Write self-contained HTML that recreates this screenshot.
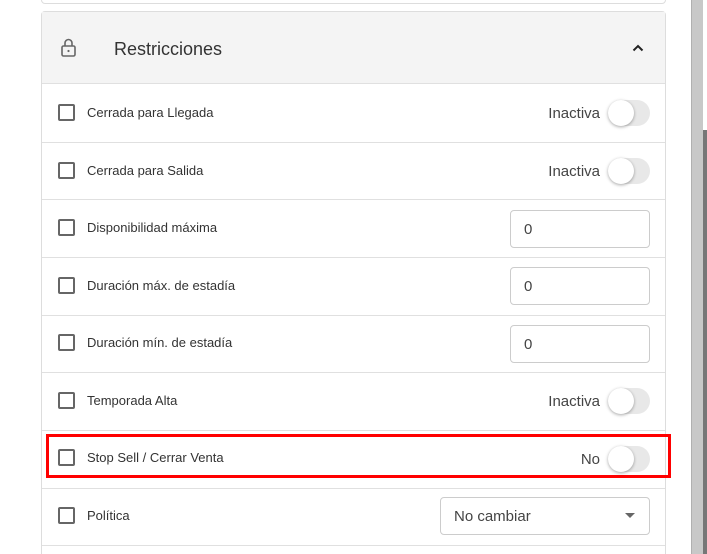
<!DOCTYPE html>
<html><head><meta charset="utf-8"><style>
*{box-sizing:border-box;margin:0;padding:0}
html,body{width:707px;height:554px;overflow:hidden}
body{background:#fff;position:relative;font-family:"Liberation Sans",Arial,sans-serif;color:#333}
.abs{position:absolute}
.card{left:41px;top:11px;width:625px;height:550px;border:1px solid #ddd;border-radius:4px;background:#fff}
.prev{left:41px;top:-10px;width:625px;height:14px;border:1px solid #ddd;border-radius:4px}
.hdr{left:42px;top:12px;width:623px;height:72px;background:#f4f4f4;border-bottom:1px solid #e0e0e0}
.line{left:42px;width:623px;height:1px;background:#e0e0e0}
.cb{left:58px;width:17px;height:17px;border:2px solid #666;border-radius:2px}
.lbl{left:87px;font-size:13px;color:#333}
.st{font-size:15px;color:#444;text-align:right}
.tg{left:608px;width:42px;height:26px;border-radius:13px;background:#e8e8e8}
.tg:after{content:"";position:absolute;left:0;top:0;width:26px;height:26px;border-radius:50%;background:#fff;box-shadow:0 1px 3px rgba(0,0,0,.35)}
.inp{left:510px;width:140px;height:38px;border:1px solid #ccc;border-radius:4px;font-size:15px;padding:10px 13px;color:#444}
</style></head><body>
<div class="abs prev"></div>
<div class="abs card"></div>
<div class="abs hdr"></div>
<svg class="abs" style="left:60px;top:38px" width="18" height="20" viewBox="0 0 18 20"><rect x="2" y="8" width="13" height="10" rx="1.5" fill="none" stroke="#666" stroke-width="1.6"/><path d="M5 8V5a3.5 3.5 0 0 1 7 0v3" fill="none" stroke="#666" stroke-width="1.6"/><circle cx="8.5" cy="13" r="1.1" fill="#666"/></svg>
<div class="abs" style="left:114px;top:39px;font-size:18px;color:#333">Restricciones</div>
<svg class="abs" style="left:632px;top:44px" width="12" height="8" viewBox="0 0 12 8"><path d="M1.5 6.5L6 2l4.5 4.5" fill="none" stroke="#222" stroke-width="2"/></svg>

<div class="abs line" style="top:142px"></div>
<div class="abs line" style="top:199px"></div>
<div class="abs line" style="top:257px"></div>
<div class="abs line" style="top:315px"></div>
<div class="abs line" style="top:372px"></div>
<div class="abs line" style="top:430px"></div>
<div class="abs line" style="top:488px"></div>
<div class="abs line" style="top:545px"></div>

<div class="abs cb" style="top:104px"></div><div class="abs lbl" style="top:105px">Cerrada para Llegada</div>
<div class="abs st" style="left:530px;width:70px;top:105px">Inactiva</div><div class="abs tg" style="top:100px"></div>

<div class="abs cb" style="top:162px"></div><div class="abs lbl" style="top:163px">Cerrada para Salida</div>
<div class="abs st" style="left:530px;width:70px;top:163px">Inactiva</div><div class="abs tg" style="top:158px"></div>

<div class="abs cb" style="top:219px"></div><div class="abs lbl" style="top:220px">Disponibilidad máxima</div>
<div class="abs inp" style="top:210px">0</div>

<div class="abs cb" style="top:277px"></div><div class="abs lbl" style="top:278px">Duración máx. de estadía</div>
<div class="abs inp" style="top:267px">0</div>

<div class="abs cb" style="top:334px"></div><div class="abs lbl" style="top:335px">Duración mín. de estadía</div>
<div class="abs inp" style="top:325px">0</div>

<div class="abs cb" style="top:392px"></div><div class="abs lbl" style="top:393px">Temporada Alta</div>
<div class="abs st" style="left:530px;width:70px;top:393px">Inactiva</div><div class="abs tg" style="top:388px"></div>

<div class="abs" style="left:46px;top:434px;width:625px;height:44px;border:3px solid #f00"></div>
<div class="abs cb" style="top:449px"></div><div class="abs lbl" style="top:450px">Stop Sell / Cerrar Venta</div>
<div class="abs st" style="left:530px;width:70px;top:451px">No</div><div class="abs tg" style="top:446px"></div>

<div class="abs cb" style="top:507px"></div><div class="abs lbl" style="top:508px">Política</div>
<div class="abs inp" style="left:440px;width:210px;top:497px">No cambiar</div>
<svg class="abs" style="left:624px;top:512px" width="12" height="7"><path d="M1 1h10L6 6z" fill="#666"/></svg>

<div class="abs" style="left:691px;top:0;width:12px;height:554px;background:#c8c8c8;border-left:1px solid #b0b0b0"></div>
<div class="abs" style="left:703px;top:0;width:4px;height:554px;background:#777"></div>
<div class="abs" style="left:703px;top:0;width:4px;height:130px;background:#fff"></div>
</body></html>
